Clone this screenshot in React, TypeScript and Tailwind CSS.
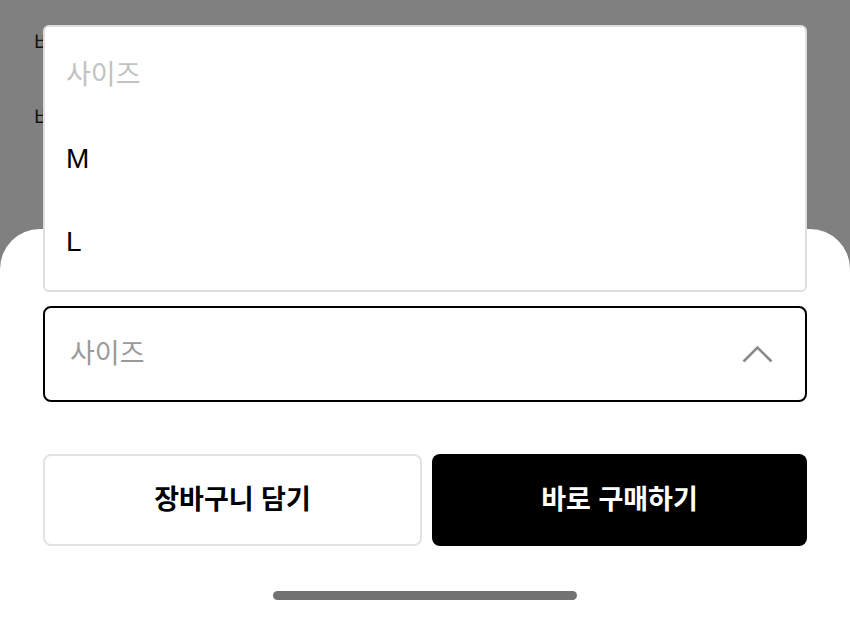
import React from "react";

const sizes = ["M", "L"];

export default function App() {
  return (
    <div
      className="relative h-[618px] w-[850px] overflow-hidden bg-[#808080] flex flex-col"
      style={{ fontFamily: '"Liberation Sans", "Noto Sans CJK KR", sans-serif' }}
    >
      {/* page behind the dim layer */}
      <div className="h-[229px] px-[34px] pt-[27px] flex flex-col gap-[43px] text-[21px] text-[#111]">
        <div>바지</div>
        <div>바지</div>
      </div>

      {/* bottom sheet */}
      <div className="flex-1 bg-white rounded-t-[40px] px-[43px] pt-[77px] flex flex-col">
        <div className="h-[96px] rounded-[8px] border-2 border-black flex items-center justify-between pl-[25px] pr-[32px]">
          <span className="text-[27px] text-[#9a9a9a]">사이즈</span>
          <svg width="31" height="18" viewBox="0 0 31 18" fill="none">
            <path d="M1.5 16.5 L15.5 2.5 L29.5 16.5" stroke="#8a8a8a" strokeWidth="2.6" />
          </svg>
        </div>

        <div className="mt-[52px] flex gap-[10px]">
          <button className="flex-1 h-[92px] rounded-[8px] border-2 border-[#e3e3e3] bg-white text-[27px] font-bold text-black">
            장바구니 담기
          </button>
          <button className="flex-1 h-[92px] rounded-[8px] bg-black text-[27px] font-bold text-white">
            바로 구매하기
          </button>
        </div>

        <div className="mt-[45px] mx-auto h-[9px] w-[304px] rounded-full bg-[#727272]" />
      </div>

      {/* opened size menu */}
      <div className="absolute left-[43px] top-[25px] w-[764px] rounded-[6px] border-2 border-[#dedede] bg-white py-[7px]">
        <div className="h-[83px] flex items-center px-[21px] text-[27px] text-[#c2c2c2]">사이즈</div>
        {sizes.map((s) => (
          <div key={s} className="h-[83px] flex items-center px-[21px] text-[28px] text-black">
            {s}
          </div>
        ))}
      </div>
    </div>
  );
}
